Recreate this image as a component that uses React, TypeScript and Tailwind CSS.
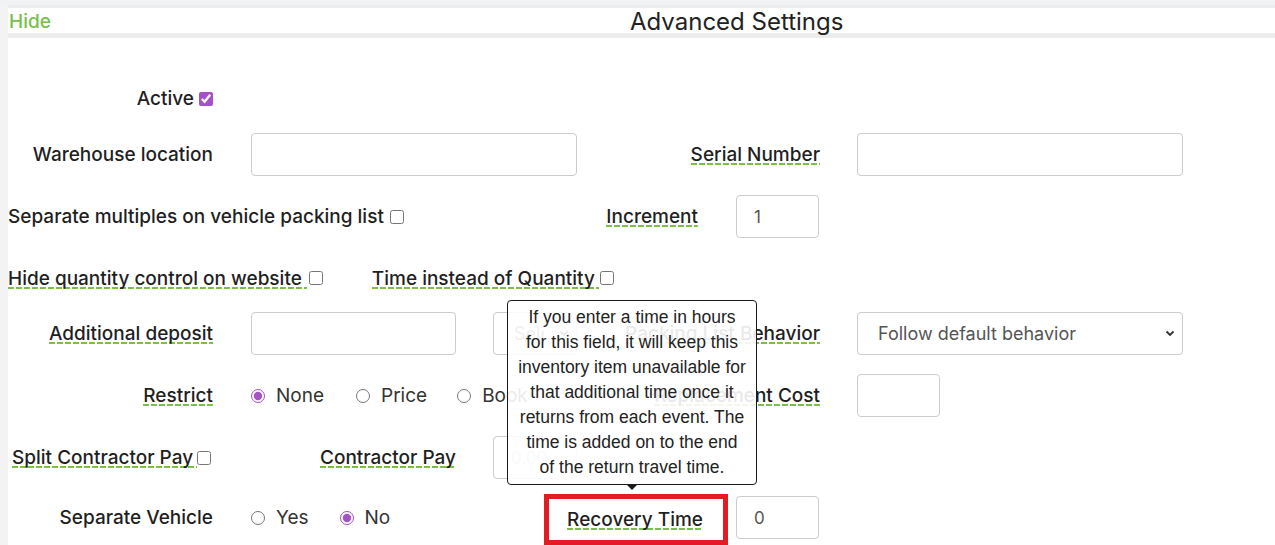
const tip =
  'bg-[repeating-linear-gradient(90deg,#7ac143_0px,#7ac143_6px,transparent_6px,transparent_8px)] bg-[length:100%_2px] bg-bottom bg-no-repeat leading-[20px]';

const tooltipLines = [
  'If you enter a time in hours',
  'for this field, it will keep this',
  'inventory item unavailable for',
  'that additional time once it',
  'returns from each event. The',
  'time is added on to the end',
  'of the return travel time.',
];

function Box({ w, value, muted }: { w: string; value?: string; muted?: boolean }) {
  return (
    <div
      className={`${w} h-[43px] shrink-0 rounded-[4px] border border-[#cccccc] bg-white pl-[17px] flex items-center text-[17px] font-normal ${
        muted ? 'text-[#c4c4c4]' : 'text-[#555]'
      }`}
    >
      {value}
    </div>
  );
}

function Select({ w, value, clip }: { w: string; value: string; clip?: string }) {
  return (
    <div
      className={`${w} h-[43px] shrink-0 overflow-hidden rounded-[4px] border border-[#cccccc] bg-white pl-[20px] pr-[7px] flex items-center text-[18px] font-normal text-[#555]`}
    >
      <span className={`whitespace-nowrap overflow-hidden ${clip ?? ''}`}>{value}</span>
      <svg width="10" height="7" viewBox="0 0 10 7" className="shrink-0 ml-auto">
        <path d="M1.5 1.5 5 5l3.5-3.5" fill="none" stroke="#333" strokeWidth="1.9" />
      </svg>
    </div>
  );
}

function Check({ checked }: { checked?: boolean }) {
  return (
    <input
      type="checkbox"
      defaultChecked={checked}
      className="m-0 w-[14px] h-[14px] accent-[#a552c7] shrink-0"
    />
  );
}

function Radio({ name, label, checked, gap }: { name: string; label: string; checked?: boolean; gap: string }) {
  return (
    <label className={`flex items-center ${gap} text-[19px] font-normal text-[#333]`}>
      <input
        type="radio"
        name={name}
        defaultChecked={checked}
        className="m-0 w-[14px] h-[14px] accent-[#a552c7] shrink-0"
      />
      <span className="ml-[11px]">{label}</span>
    </label>
  );
}

export default function App() {
  return (
    <div className="relative w-[1275px] h-[545px] overflow-hidden bg-white font-[Inter,sans-serif] text-[#1f1f1f]">
      <div className="h-[5px] bg-[#f1f2f4]" />
      <div className="flex h-[540px]">
        <div className="w-[8px] shrink-0 bg-[#f3f3f3]" />
        <div className="flex-1 flex flex-col">
          {/* header */}
          <div className="h-[33px] border-t-[3px] border-b-[5px] border-[#ececec] flex items-center">
            <div className="w-[622px] pl-[1px] pt-[3px] text-[19px] font-medium text-[#78c04a]">Hide</div>
            <div className="pt-[2px] text-[24px] leading-[25px] text-[#222]">Advanced Settings</div>
          </div>

          <div className="flex flex-col pt-[39px] text-[19px] font-medium leading-[22px]">
            {/* Active */}
            <div className="h-[43px] flex items-center">
              <div className="w-[205px] flex items-center justify-end gap-[5px]">
                <span>Active</span>
                <Check checked />
              </div>
            </div>

            {/* Warehouse / Serial */}
            <div className="h-[43px] mt-[13px] flex items-center">
              <div className="w-[205px] text-right">Warehouse location</div>
              <div className="ml-[38px]">
                <Box w="w-[326px]" />
              </div>
              <div className="w-[243px] flex justify-end">
                <span className={tip}>Serial Number</span>
              </div>
              <div className="ml-[37px]">
                <Box w="w-[326px]" />
              </div>
            </div>

            {/* Separate multiples / Increment */}
            <div className="h-[43px] mt-[19px] flex items-center">
              <div className="w-[690px] flex items-center justify-between">
                <div className="flex items-center gap-[6px]">
                  <span>Separate multiples on vehicle packing list</span>
                  <Check />
                </div>
                <span className={tip}>Increment</span>
              </div>
              <div className="ml-[38px]">
                <Box w="w-[83px]" value="1" />
              </div>
            </div>

            {/* Hide quantity / Time instead */}
            <div className="h-[43px] mt-[19px] flex items-center">
              <span className={`${tip} pr-[5px]`}>Hide quantity control on website</span>
              <span className="ml-[2px]">
                <Check />
              </span>
              <span className={`${tip} ml-[49px] pr-[4px]`}>Time instead of Quantity</span>
              <span className="ml-[1px]">
                <Check />
              </span>
            </div>

            {/* Additional deposit / Packing list */}
            <div className="h-[43px] mt-[12px] flex items-center">
              <div className="w-[205px] flex justify-end">
                <span className={tip}>Additional deposit</span>
              </div>
              <div className="ml-[38px]">
                <Box w="w-[205px]" />
              </div>
              <div className="ml-[37px]">
                <Select w="w-[84px]" value="Select" clip="w-[30px]" />
              </div>
              <div className="w-[243px] flex justify-end">
                <span className={tip}>Packing List Behavior</span>
              </div>
              <div className="ml-[37px]">
                <Select w="w-[326px]" value="Follow default behavior" />
              </div>
            </div>

            {/* Restrict / Replacement */}
            <div className="h-[43px] mt-[19px] flex items-center">
              <div className="w-[205px] flex justify-end">
                <span className={tip}>Restrict</span>
              </div>
              <div className="ml-[38px] w-[326px] flex items-center">
                <Radio name="restrict" label="None" checked gap="mr-[32px]" />
                <Radio name="restrict" label="Price" gap="mr-[30px]" />
                <Radio name="restrict" label="Book" gap="mr-[32px]" />
              </div>
              <div className="w-[243px] flex justify-end">
                <span className={tip}>Replacement Cost</span>
              </div>
              <div className="ml-[37px]">
                <Box w="w-[83px]" />
              </div>
            </div>

            {/* Split contractor pay */}
            <div className="h-[43px] mt-[19px] flex items-center">
              <div className="w-[205px] pl-[4px] flex items-center">
                <span className={`${tip} pr-[4px]`}>Split Contractor Pay</span>
                <Check />
              </div>
              <div className="w-[243px] flex justify-end">
                <span className={tip}>Contractor Pay</span>
              </div>
              <div className="ml-[37px]">
                <Box w="w-[84px]" value="0.00" muted />
              </div>
            </div>

            {/* Separate vehicle / Recovery time */}
            <div className="h-[43px] mt-[17px] flex items-center">
              <div className="w-[205px] text-right">Separate Vehicle</div>
              <div className="ml-[38px] w-[293px] flex items-center">
                <Radio name="vehicle" label="Yes" gap="mr-[31px]" />
                <Radio name="vehicle" label="No" checked gap="mr-[31px]" />
              </div>
              <div className="w-[184px] h-[51px] mt-[-2px] mb-[-6px] shrink-0 border-[5px] border-[#e31b23] flex items-center justify-end pr-[20px]">
                <span className={tip}>Recovery Time</span>
              </div>
              <div className="ml-[8px]">
                <Box w="w-[83px]" value="0" />
              </div>
            </div>
          </div>
        </div>
      </div>

      {/* tooltip */}
      <div className="absolute left-[507px] top-[300px] w-[250px] h-[185px] rounded-[4px] border border-[#1a1a1a] bg-white/90 pt-[4px] text-center font-['Liberation_Sans',Arial,sans-serif] text-[17.5px] leading-[25px] text-[#222]">
        {tooltipLines.map((l) => (
          <div key={l} className="whitespace-nowrap">
            {l}
          </div>
        ))}
        <div className="absolute left-1/2 -translate-x-1/2 top-full w-0 h-0 border-x-[6px] border-x-transparent border-t-[6px] border-t-[#1a1a1a]" />
      </div>
    </div>
  );
}
